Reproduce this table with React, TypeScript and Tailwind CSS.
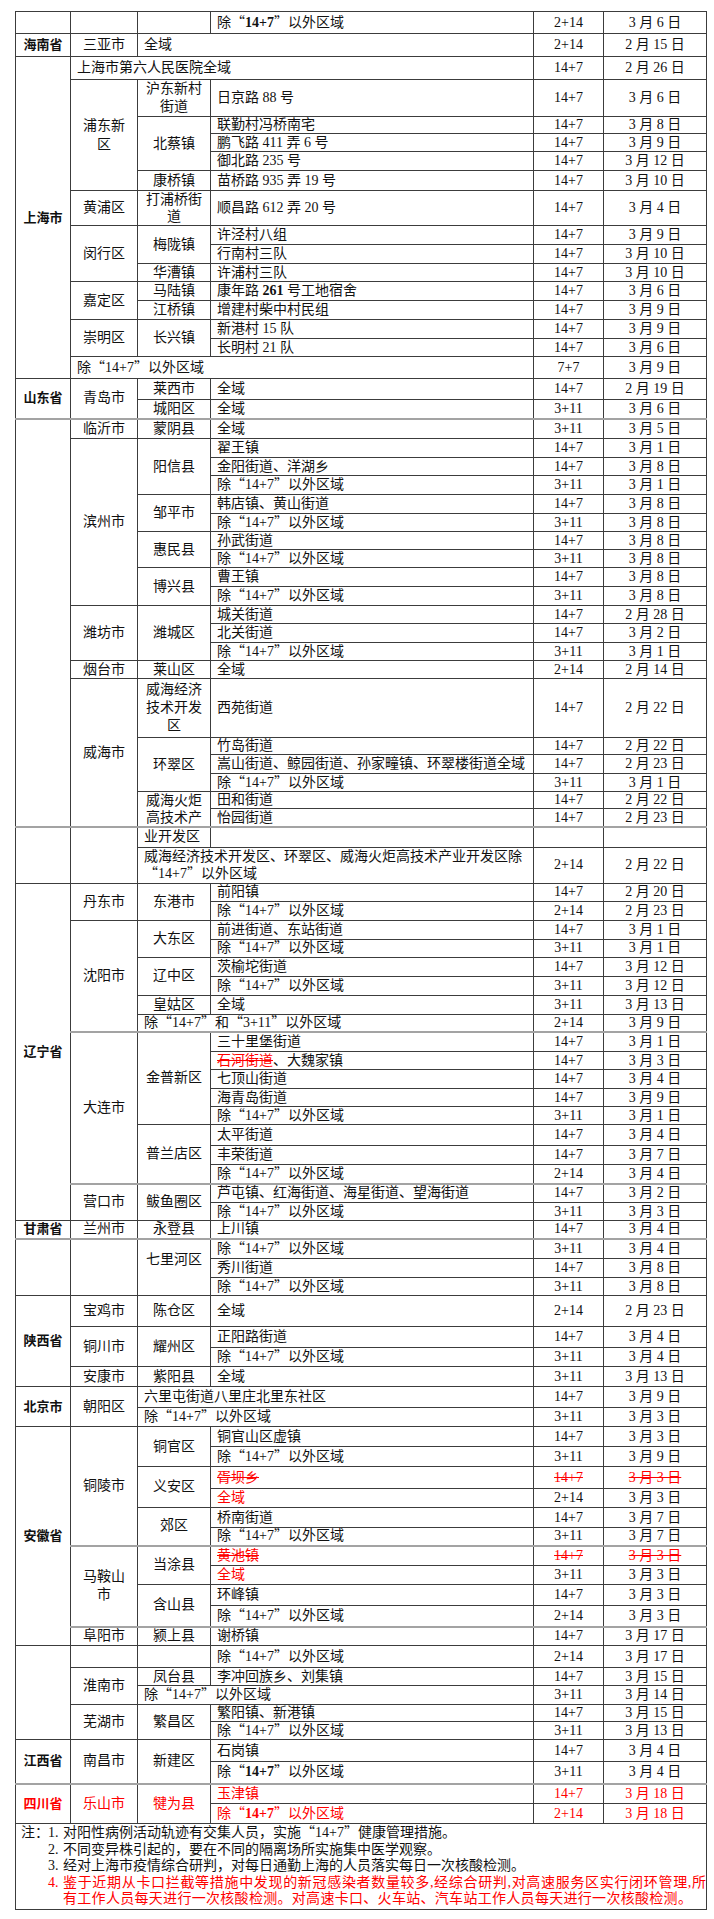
import React from "react";

type Cell = { t: React.ReactNode; rs?: number; cs?: number; a: "c" | "l"; k?: string };
type Row = { h: string; b?: boolean; c: Cell[] };

// leading-[0] keeps the CJK quote from stretching the line box
const cjk = "font-['Noto_Sans_CJK_SC',sans-serif] leading-[0]";
const red = "text-[#ff0000]";
const strike = "text-[#ff0000] line-through";

// quotes go to the CJK font so they stay full width
const fmt = (t: React.ReactNode) => {
  if (typeof t !== "string") return t;
  return t.split(/(\n|[“”])/).map((p, i) =>
    p === "\n" ? (
      <br key={i} />
    ) : p === "“" || p === "”" ? (
      <span key={i} className={cjk}>
        {p}
      </span>
    ) : (
      p
    )
  );
};

const dq = (inner: React.ReactNode) => (
  <>
    <span className={cjk}>“</span>
    {inner}
    <span className={cjk}>”</span>
  </>
);

const C = (t: React.ReactNode, rs = 1, k = ""): Cell => ({ t, rs, a: "c", k });
const L = (t: React.ReactNode, cs = 1, k = ""): Cell => ({ t, cs, a: "l", k });
const P = (t: string, rs = 1, k = ""): Cell => ({ t, rs, a: "c", k: "font-bold text-[13px] " + k });
const T = (a: React.ReactNode, n: string, d: string, k = ""): Cell[] => [L(a, 1, k), C(n, 1, k), C(d, 1, k)];
const r = (h: string, c: Cell[], b = false): Row => ({ h, c, b });

const out = "除“14+7”以外区域";
const outB = (
  <>
    除{dq(<b>14+7</b>)}以外区域
  </>
);

const rows: Row[] = [
  r("h-[22px]", [C(""), C(""), C(""), ...T(outB, "2+14", "3 月 6 日")]),
  r("h-[23px]", [P("海南省"), C("三亚市"), L("全域", 2), C("2+14"), C("2 月 15 日")]),
  r("h-[23px]", [P("上海市", 15), L("上海市第六人民医院全域", 3, "pl-[5px]"), C("14+7"), C("2 月 26 日")]),
  r("h-[37px]", [C("浦东新\n区", 5, "leading-[19px]"), C("沪东新村\n街道", 1, "leading-[18px]"), ...T("日京路 88 号", "14+7", "3 月 6 日")]),
  r("h-[17px]", [C("北蔡镇", 3), ...T("联勤村冯桥南宅", "14+7", "3 月 8 日")]),
  r("h-[18px]", T("鹏飞路 411 弄 6 号", "14+7", "3 月 9 日")),
  r("h-[19px]", T("御北路 235 号", "14+7", "3 月 12 日")),
  r("h-[20px]", [C("康桥镇"), ...T("苗桥路 935 弄 19 号", "14+7", "3 月 10 日")]),
  r("h-[35px]", [C("黄浦区"), C("打浦桥街\n道", 1, "leading-[17px]"), ...T("顺昌路 612 弄 20 号", "14+7", "3 月 4 日")]),
  r("h-[19px]", [C("闵行区", 3), C("梅陇镇", 2), ...T("许泾村八组", "14+7", "3 月 9 日")]),
  r("h-[19px]", T("行南村三队", "14+7", "3 月 10 日")),
  r("h-[18px]", [C("华漕镇"), ...T("许浦村三队", "14+7", "3 月 10 日")]),
  r("h-[19px]", [
    C("嘉定区", 2),
    C("马陆镇"),
    ...T(
      <>
        康年路 <b>261</b> 号工地宿舍
      </>,
      "14+7",
      "3 月 6 日"
    ),
  ]),
  r("h-[19px]", [C("江桥镇"), ...T("增建村柴中村民组", "14+7", "3 月 9 日")]),
  r("h-[19px]", [C("崇明区", 2), C("长兴镇", 2), ...T("新港村 15 队", "14+7", "3 月 9 日")]),
  r("h-[18px]", T("长明村 21 队", "14+7", "3 月 6 日")),
  r("h-[22px]", [L(out, 3, "pl-[5px]"), C("7+7"), C("3 月 9 日")]),
  r("h-[21px]", [P("山东省", 2), C("青岛市", 2), C("莱西市"), ...T("全域", "14+7", "2 月 19 日")]),
  r("h-[19px]", [C("城阳区"), ...T("全域", "3+11", "3 月 6 日")]),

  // page 2
  r("h-[20px]", [C("", 20), C("临沂市"), C("蒙阴县"), ...T("全域", "3+11", "3 月 5 日")], true),
  r("h-[19px]", [C("滨州市", 9), C("阳信县", 3), ...T("翟王镇", "14+7", "3 月 1 日")]),
  r("h-[18px]", T("金阳街道、洋湖乡", "14+7", "3 月 8 日")),
  r("h-[19px]", T(out, "3+11", "3 月 1 日")),
  r("h-[19px]", [C("邹平市", 2), ...T("韩店镇、黄山街道", "14+7", "3 月 8 日")]),
  r("h-[18px]", T(out, "3+11", "3 月 8 日")),
  r("h-[18px]", [C("惠民县", 2), ...T("孙武街道", "14+7", "3 月 8 日")]),
  r("h-[18px]", T(out, "3+11", "3 月 8 日")),
  r("h-[19px]", [C("博兴县", 2), ...T("曹王镇", "14+7", "3 月 8 日")]),
  r("h-[19px]", T(out, "3+11", "3 月 8 日")),
  r("h-[18px]", [C("潍坊市", 3), C("潍城区", 3), ...T("城关街道", "14+7", "2 月 28 日")]),
  r("h-[19px]", T("北关街道", "14+7", "3 月 2 日")),
  r("h-[18px]", T(out, "3+11", "3 月 1 日")),
  r("h-[18px]", [C("烟台市"), C("莱山区"), ...T("全域", "2+14", "2 月 14 日")]),
  r("h-[59px]", [C("威海市", 6), C("威海经济\n技术开发\n区", 1, "leading-[18px]"), ...T("西苑街道", "14+7", "2 月 22 日")]),
  r("h-[17px]", [C("环翠区", 3), ...T("竹岛街道", "14+7", "2 月 22 日")]),
  r("h-[19px]", T("嵩山街道、鲸园街道、孙家疃镇、环翠楼街道全域", "14+7", "2 月 23 日")),
  r("h-[18px]", T(out, "3+11", "3 月 1 日")),
  r("h-[17px]", [C("威海火炬\n高技术产", 2, "leading-[17px]"), ...T("田和街道", "14+7", "2 月 22 日")]),
  r("h-[17px]", T("怡园街道", "14+7", "2 月 23 日")),

  // page 3
  r("h-[20px]", [C("", 2), C("", 2), L("业开发区", 1, "pl-[5px]"), C(""), C(""), C("")], true),
  r("h-[36px]", [
    L("威海经济技术开发区、环翠区、威海火炬高技术产业开发区除\n“14+7”以外区域", 2, "leading-[17px] pl-[5px]"),
    C("2+14"),
    C("2 月 22 日"),
  ]),
  r("h-[18px]", [P("辽宁省", 18), C("丹东市", 2), C("东港市", 2), ...T("前阳镇", "14+7", "2 月 20 日")]),
  r("h-[19px]", T(out, "2+14", "2 月 23 日")),
  r("h-[19px]", [C("沈阳市", 6), C("大东区", 2), ...T("前进街道、东站街道", "14+7", "3 月 1 日")]),
  r("h-[18px]", T(out, "3+11", "3 月 1 日")),
  r("h-[19px]", [C("辽中区", 2), ...T("茨榆坨街道", "14+7", "3 月 12 日")]),
  r("h-[19px]", T(out, "3+11", "3 月 12 日")),
  r("h-[19px]", [C("皇姑区"), ...T("全域", "3+11", "3 月 13 日")]),
  r("h-[17px]", [L("除“14+7”和“3+11”以外区域", 2, "pl-[5px]"), C("2+14"), C("3 月 9 日")]),
  r("h-[20px]", [C("大连市", 8), C("金普新区", 5), ...T("三十里堡街道", "14+7", "3 月 1 日")], true),
  r(
    "h-[18px]",
    T(
      <>
        <span className={strike}>石河街道</span>、大魏家镇
      </>,
      "14+7",
      "3 月 3 日"
    )
  ),
  r("h-[19px]", T("七顶山街道", "14+7", "3 月 4 日")),
  r("h-[18px]", T("海青岛街道", "14+7", "3 月 9 日")),
  r("h-[18px]", T(out, "3+11", "3 月 1 日")),
  r("h-[21px]", [C("普兰店区", 3), ...T("太平街道", "14+7", "3 月 4 日")]),
  r("h-[19px]", T("丰荣街道", "14+7", "3 月 7 日")),
  r("h-[19px]", T(out, "2+14", "3 月 4 日")),
  r("h-[19px]", [C("营口市", 2), C("鲅鱼圈区", 2), ...T("芦屯镇、红海街道、海星街道、望海街道", "14+7", "3 月 2 日")], true),
  r("h-[18px]", T(out, "3+11", "3 月 3 日")),
  r("h-[18px]", [P("甘肃省"), C("兰州市"), C("永登县"), ...T("上川镇", "14+7", "3 月 4 日")]),

  // page 4
  r("h-[20px]", [C("", 3), C("", 3), C("七里河区", 3, "pb-[14px]"), ...T(out, "3+11", "3 月 4 日")], true),
  r("h-[19px]", T("秀川街道", "14+7", "3 月 8 日")),
  r("h-[18px]", T(out, "3+11", "3 月 8 日")),
  r("h-[31px]", [P("陕西省", 4), C("宝鸡市"), C("陈仓区"), ...T("全域", "2+14", "2 月 23 日")]),
  r("h-[21px]", [C("铜川市", 2), C("耀州区", 2), ...T("正阳路街道", "14+7", "3 月 4 日")]),
  r("h-[19px]", T(out, "3+11", "3 月 4 日")),
  r("h-[20px]", [C("安康市"), C("紫阳县"), ...T("全域", "3+11", "3 月 13 日")]),
  r("h-[21px]", [P("北京市", 2), C("朝阳区", 2), L("六里屯街道八里庄北里东社区", 2, "pl-[5px]"), C("14+7"), C("3 月 9 日")]),
  r("h-[19px]", [L(out, 2, "pl-[5px]"), C("3+11"), C("3 月 3 日")]),
  r("h-[20px]", [P("安徽省", 11), C("铜陵市", 6), C("铜官区", 2), ...T("铜官山区虚镇", "14+7", "3 月 3 日")]),
  r("h-[20px]", T(out, "3+11", "3 月 9 日")),
  r("h-[22px]", [C("义安区", 2), ...T("胥坝乡", "14+7", "3 月 3 日", strike)]),
  r("h-[19px]", [L("全域", 1, red), C("2+14"), C("3 月 3 日")]),
  r("h-[20px]", [C("郊区", 2), ...T("桥南街道", "14+7", "3 月 7 日")]),
  r("h-[18px]", T(out, "3+11", "3 月 7 日")),
  r("h-[20px]", [C("马鞍山\n市", 4, "leading-[18px]"), C("当涂县", 2), ...T("黄池镇", "14+7", "3 月 3 日", strike)], true),
  r("h-[19px]", [L("全域", 1, red), C("3+11"), C("3 月 3 日")]),
  r("h-[21px]", [C("含山县", 2), ...T("环峰镇", "14+7", "3 月 3 日")]),
  r("h-[21px]", T(out, "2+14", "3 月 3 日")),
  r("h-[19px]", [C("阜阳市"), C("颍上县"), ...T("谢桥镇", "14+7", "3 月 17 日")], true),
  r("h-[22px]", [C("", 5), C(""), C(""), ...T(out, "2+14", "3 月 17 日")]),
  r("h-[18px]", [C("淮南市", 2), C("凤台县"), ...T("李冲回族乡、刘集镇", "14+7", "3 月 15 日")]),
  r("h-[19px]", [L(out, 2, "pl-[5px]"), C("3+11"), C("3 月 14 日")]),
  r("h-[17px]", [C("芜湖市", 2), C("繁昌区", 2), ...T("繁阳镇、新港镇", "14+7", "3 月 15 日")]),
  r("h-[18px]", T(out, "3+11", "3 月 13 日")),
  r("h-[22px]", [P("江西省", 2), C("南昌市", 2), C("新建区", 2), ...T("石岗镇", "14+7", "3 月 4 日")]),
  r("h-[22px]", T(outB, "3+11", "3 月 4 日")),
  r(
    "h-[20px]",
    [P("四川省", 2, red), C("乐山市", 2, red), C("犍为县", 2, red), ...T("玉津镇", "14+7", "3 月 18 日", red)],
    true
  ),
  r("h-[20px]", T(outB, "2+14", "3 月 18 日", red)),
];

const Note = ({ lead = "", n, children, k = "" }: { lead?: string; n: string; children: React.ReactNode; k?: string }) => (
  <div className={`flex ${k}`}>
    <span className="w-[27px] shrink-0">{lead}</span>
    <span className="w-[15px] shrink-0">{n}</span>
    <div className="flex-1">{children}</div>
  </div>
);

export default function App() {
  return (
    <div className="min-h-[1919px] bg-white pl-[15px] pt-[11px] font-['Liberation_Serif','Noto_Sans_CJK_SC',serif] text-[14px] leading-[16px] text-[#111]">
      <table className="w-[691px] table-fixed border-collapse">
        <colgroup>
          <col className="w-[55px]" />
          <col className="w-[67px]" />
          <col className="w-[73px]" />
          <col className="w-[323px]" />
          <col className="w-[70px]" />
          <col className="w-[103px]" />
        </colgroup>
        <tbody>
          {rows.map((row, i) => (
            <tr key={i} className={row.h}>
              {row.c.map((cell, j) => (
                <td
                  key={j}
                  rowSpan={cell.rs}
                  colSpan={cell.cs}
                  className={`border border-[#3c3c3c] p-0 align-middle whitespace-nowrap ${
                    cell.a === "l" ? "pl-[6px] text-left" : "text-center"
                  } ${row.b ? "border-t-2 border-t-[#a3a3a3]" : ""} ${cell.k ?? ""}`}
                >
                  {fmt(cell.t)}
                </td>
              ))}
            </tr>
          ))}
          <tr>
            <td colSpan={6} className="h-[86px] border border-[#3c3c3c] pl-[5px] pt-[1px] text-left align-top leading-[16.6px]">
              <Note lead="注：" n="1.">
                对阳性病例活动轨迹有交集人员，实施{dq("14+7")}健康管理措施。
              </Note>
              <Note n="2.">不同变异株引起的，要在不同的隔离场所实施集中医学观察。</Note>
              <Note n="3.">经对上海市疫情综合研判，对每日通勤上海的人员落实每日一次核酸检测。</Note>
              <Note n="4." k={red}>
                <div className="text-justify [text-align-last:justify]">
                  鉴于近期从卡口拦截等措施中发现的新冠感染者数量较多,经综合研判,对高速服务区实行闭环管理,所
                </div>
                <div className="tracking-[0.3px]">
                  有工作人员每天进行一次核酸检测。对高速卡口、火车站、汽车站工作人员每天进行一次核酸检测。
                </div>
              </Note>
            </td>
          </tr>
        </tbody>
      </table>
    </div>
  );
}
